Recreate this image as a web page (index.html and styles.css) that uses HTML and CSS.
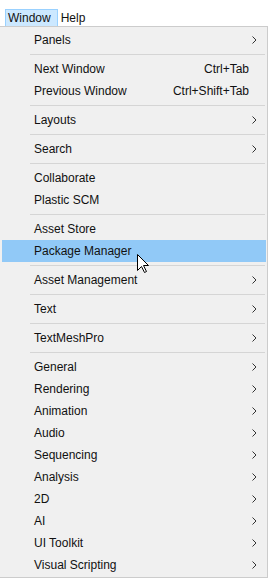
FILE: index.html
```html
<!DOCTYPE html>
<html>
<head>
<link rel="stylesheet" href="styles.css">
</head>

<body>
    <div class="menubar">
        <div class="menubar-item active">Window</div>
        <div class="menubar-item">Help</div>
    </div>

    <div class="menu">
        <div class="item sub"><span class="label">Panels</span></div>
        <div class="sep"></div>
        <div class="item"><span class="label">Next Window</span><span class="key">Ctrl+Tab</span></div>
        <div class="item"><span class="label">Previous Window</span><span class="key">Ctrl+Shift+Tab</span></div>
        <div class="sep"></div>
        <div class="item sub"><span class="label">Layouts</span></div>
        <div class="sep"></div>
        <div class="item sub"><span class="label">Search</span></div>
        <div class="sep"></div>
        <div class="item"><span class="label">Collaborate</span></div>
        <div class="item"><span class="label">Plastic SCM</span></div>
        <div class="sep"></div>
        <div class="item"><span class="label">Asset Store</span></div>
        <div class="item hover"><span class="label">Package Manager</span></div>
        <div class="sep"></div>
        <div class="item sub"><span class="label">Asset Management</span></div>
        <div class="sep"></div>
        <div class="item sub"><span class="label">Text</span></div>
        <div class="sep"></div>
        <div class="item sub"><span class="label">TextMeshPro</span></div>
        <div class="sep"></div>
        <div class="item sub"><span class="label">General</span></div>
        <div class="item sub"><span class="label">Rendering</span></div>
        <div class="item sub"><span class="label">Animation</span></div>
        <div class="item sub"><span class="label">Audio</span></div>
        <div class="item sub"><span class="label">Sequencing</span></div>
        <div class="item sub"><span class="label">Analysis</span></div>
        <div class="item sub"><span class="label">2D</span></div>
        <div class="item sub"><span class="label">AI</span></div>
        <div class="item sub"><span class="label">UI Toolkit</span></div>
        <div class="item sub"><span class="label">Visual Scripting</span></div>
    </div>

    <!-- mouse pointer over Package Manager -->
    <svg class="cursor" width="13" height="20" viewBox="0 0 13 20">
        <path d="M0.5 0.5 L0.5 16.5 L4.5 12.5 L7.5 18.5 L9.5 17.5 L6.5 11.5 L11.5 11.5 Z" fill="#fff" stroke="#000" stroke-width="1"/>
    </svg>

    <script>
        // add the little ">" to every item that opens a submenu
        document.querySelectorAll('.item.sub').forEach(function (item) {
            item.insertAdjacentHTML('beforeend',
                '<svg class="arrow" width="5" height="8" viewBox="0 0 5 8"><path d="M0.5 0.5 L4 4 L0.5 7.5" fill="none" stroke="#333" stroke-width="1"/></svg>')
        })
    </script>
</body>

</html>
```

FILE: styles.css
```css
body {
    margin: 0;
    background-color: #ffffff;
    font-family: "Liberation Sans", "Noto Sans", sans-serif;
    font-size: 12px;
    color: #111111;
}

.menubar {
    height: 26px;
    display: flex;
    align-items: flex-end;
    padding-left: 5px;
    box-sizing: border-box;
}

.menubar-item {
    height: 17px;
    line-height: 16px;
    padding: 0 6px 0 2px;
    box-sizing: border-box;
    border: 1px solid transparent;
}

.menubar-item.active {
    background-color: #cce8ff;
    border-color: #99d1ff;
    border-bottom: 0;
}

.menu {
    width: 268px;
    background-color: #f0f0f0;
    border: 1px solid #cccccc;
    border-left: 0;
    padding: 2px 0 1px 0;
    box-sizing: border-box;
}

.item {
    height: 22px;
    display: flex;
    align-items: center;
    padding: 0 17px 0 32px;
    margin: 0 1px 0 2px;
}

.item .label {
    flex: 1;
}

.item .arrow {
    margin-right: -8px;
}

.item.hover {
    background-color: #91c9f7;
}

.sep {
    height: 7px;
    display: flex;
    align-items: center;
    padding: 0 2px 0 30px;
}

.sep::after {
    content: "";
    flex: 1;
    height: 1px;
    background-color: #d5d5d5;
}

.cursor {
    position: absolute;
    left: 137px;
    top: 254px;
}
```
